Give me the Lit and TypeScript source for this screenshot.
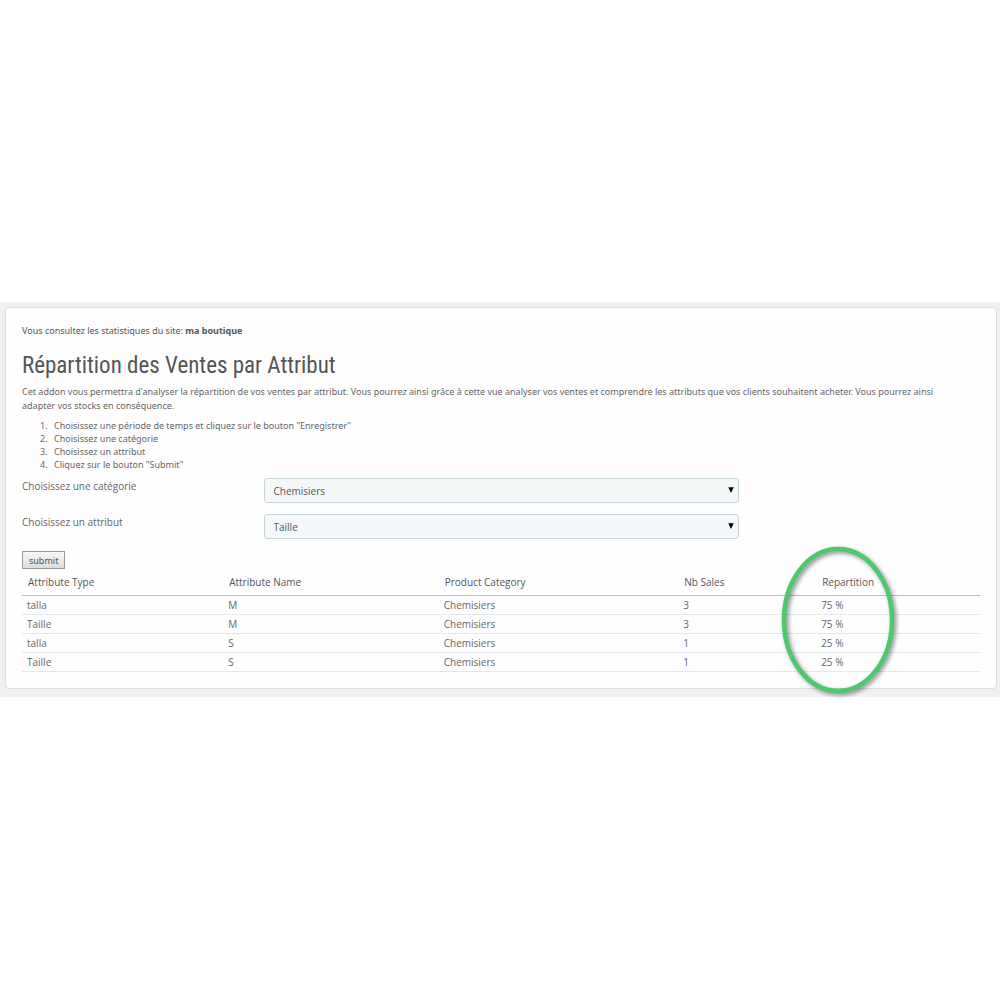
import { LitElement, html, css } from "lit";
import { customElement } from "lit/decorators.js";

interface Sale {
  type: string;
  name: string;
  category: string;
  count: number;
  share: number;
}

const SALES: Sale[] = [
  { type: "talla", name: "M", category: "Chemisiers", count: 3, share: 75 },
  { type: "Taille", name: "M", category: "Chemisiers", count: 3, share: 75 },
  { type: "talla", name: "S", category: "Chemisiers", count: 1, share: 25 },
  { type: "Taille", name: "S", category: "Chemisiers", count: 1, share: 25 },
];

const STEPS = [
  'Choisissez une période de temps et cliquez sur le bouton "Enregistrer"',
  "Choisissez une catégorie",
  "Choisissez un attribut",
  'Cliquez sur le bouton "Submit"',
];

@customElement("app-root")
export class AppRoot extends LitElement {
  static styles = css`
    :host {
      display: flex;
      flex-direction: column;
      justify-content: center;
      box-sizing: border-box;
      min-height: 100vh;
      padding-bottom: 1px;
      background: #fff;
      color: #666;
      font: 9px/13px "Noto Sans", "Open Sans", sans-serif;
    }
    * {
      box-sizing: border-box;
    }
    .page {
      background: #eff0f1;
      padding: 5px 3px 8px 5px;
    }
    .panel {
      background: #fefefe;
      border: 1px solid #d9dfe2;
      border-radius: 4px;
      padding: 16px;
    }
    .site {
      margin: 0;
      color: #555;
    }
    .title {
      margin: 15px 0 5px;
      color: #555;
      font: 400 23px/28px "Ubuntu Condensed", "Roboto Condensed", "Liberation Sans Narrow",
        "Open Sans Condensed", Roboto, sans-serif;
    }
    .intro {
      margin: 0;
      padding-right: 16px;
      line-height: 14px;
    }
    .steps {
      margin: 6px 0 7px;
      padding-left: 28px;
    }
    .steps li {
      padding-left: 4px;
    }
    .field {
      display: grid;
      grid-template-columns: 1fr 2fr 1fr;
      gap: 4px;
      margin-bottom: 11px;
    }
    .field label {
      font: 10px/16px "Open Sans", "Noto Sans", sans-serif;
    }
    .picker {
      position: relative;
    }
    .picker select {
      display: block;
      width: 100%;
      height: 25px;
      padding: 1px 20px 0 9px;
      appearance: none;
      border: 1px solid #c9d5dc;
      border-radius: 3px;
      background: #f4f8f9;
      color: #555;
      font: 10px/13px "Open Sans", "Noto Sans", sans-serif;
    }
    .arrow {
      position: absolute;
      top: 9px;
      right: 5px;
      width: 6px;
      height: 6px;
      fill: #000;
      pointer-events: none;
    }
    .submit {
      display: block;
      height: 18px;
      margin-top: 12px;
      padding: 0 6px;
      border: 1px solid #999;
      border-radius: 0;
      background: linear-gradient(#f7f7f7, #dcdcdc);
      color: #555;
      font: inherit;
    }
    .sales {
      width: 100%;
      table-layout: fixed;
      border-collapse: collapse;
      text-align: left;
      font: 10px/13px "Open Sans", "Noto Sans", sans-serif;
    }
    .sales th {
      height: 26px;
      padding: 1px 6px 0;
      border-bottom: 1px solid #a9c4d2;
      color: #555;
      font-weight: 400;
    }
    .sales td {
      height: 19px;
      padding: 1px 5px 0;
      border-bottom: 1px solid #e4e7e9;
    }
    .sales .type {
      width: 21%;
    }
    .sales .name {
      width: 22.5%;
    }
    .sales .category {
      width: 25%;
    }
    .sales .count {
      width: 14.4%;
    }
    .sales .share {
      position: relative;
    }
    .ring {
      position: absolute;
      top: -26px;
      left: -38px;
      width: 124px;
      height: 156px;
      pointer-events: none;
      filter: drop-shadow(2px 2px 2px rgba(0, 0, 0, 0.45));
    }
  `;

  private renderPicker(id: string, label: string, options: string[]) {
    return html`
      <div class="field">
        <label for=${id}>${label}</label>
        <div class="picker">
          <select id=${id}>
            ${options.map((o) => html`<option>${o}</option>`)}
          </select>
          <svg class="arrow" viewBox="0 0 6 6" aria-hidden="true"><path d="M0.3 0.3H5.7L3 6Z" /></svg>
        </div>
      </div>
    `;
  }

  render() {
    return html`
      <div class="page">
        <main class="panel">
          <p class="site">Vous consultez les statistiques du site: <strong>ma boutique</strong></p>
          <h1 class="title">Répartition des Ventes par Attribut</h1>
          <p class="intro">
            Cet addon vous permettra d'analyser la répartition de vos ventes par attribut. Vous pourrez ainsi grâce à
            cette vue analyser vos ventes et comprendre les attributs que vos clients souhaitent acheter. Vous pourrez
            ainsi adapter vos stocks en conséquence.
          </p>
          <ol class="steps">
            ${STEPS.map((s) => html`<li>${s}</li>`)}
          </ol>
          <form @submit=${(e: Event) => e.preventDefault()}>
            ${this.renderPicker("category", "Choisissez une catégorie", ["Chemisiers"])}
            ${this.renderPicker("attribute", "Choisissez un attribut", ["Taille"])}
            <button class="submit" type="submit">submit</button>
          </form>
          <table class="sales">
            <thead>
              <tr>
                <th class="type" scope="col">Attribute Type</th>
                <th class="name" scope="col">Attribute Name</th>
                <th class="category" scope="col">Product Category</th>
                <th class="count" scope="col">Nb Sales</th>
                <th class="share" scope="col">
                  Repartition
                  <svg class="ring" viewBox="0 0 124 156" aria-hidden="true">
                    <ellipse cx="60" cy="77" rx="54" ry="71" fill="none" stroke="#4cc96b" stroke-width="4.5" />
                  </svg>
                </th>
              </tr>
            </thead>
            <tbody>
              ${SALES.map(
                (s) => html`<tr>
                  <td>${s.type}</td>
                  <td>${s.name}</td>
                  <td>${s.category}</td>
                  <td>${s.count}</td>
                  <td>${s.share} %</td>
                </tr>`,
              )}
            </tbody>
          </table>
        </main>
      </div>
    `;
  }
}
